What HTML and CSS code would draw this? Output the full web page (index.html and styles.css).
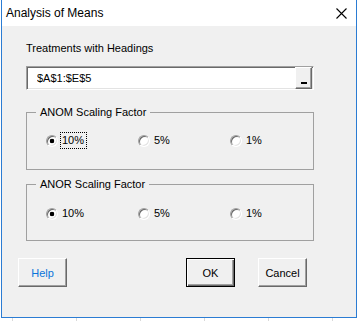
FILE: index.html
```html
<!DOCTYPE html>
<html lang="en">
<head>
    <meta charset="UTF-8">
    <meta name="viewport" content="width=device-width, initial-scale=1.0">
    <title>Analysis of Means</title>
    <link rel="stylesheet" href="styles.css">
</head>
<body>

<div class="window">
    <div class="titlebar">
        <span class="title">Analysis of Means</span>
        <svg class="close" width="11" height="11" viewBox="0 0 11 11">
            <path d="M0.5 0.5 L10.5 10.5 M10.5 0.5 L0.5 10.5" stroke="#000" stroke-width="1.1" fill="none"/>
        </svg>
    </div>

    <div class="content">
        <div class="form">
            <label class="field-label" for="range">Treatments with Headings</label>
            <div class="range">
                <input type="text" id="range" value="$A$1:$E$5">
                <button class="pick"><span class="dash"></span></button>
            </div>

            <fieldset class="group first">
                <legend>ANOM Scaling Factor</legend>
                <div class="options">
                    <label class="opt"><input type="radio" name="anom" checked><span class="opt-text focus">10%</span></label>
                    <label class="opt"><input type="radio" name="anom"><span class="opt-text">5%</span></label>
                    <label class="opt"><input type="radio" name="anom"><span class="opt-text">1%</span></label>
                </div>
            </fieldset>

            <fieldset class="group second">
                <legend>ANOR Scaling Factor</legend>
                <div class="options">
                    <label class="opt"><input type="radio" name="anor" checked><span class="opt-text">10%</span></label>
                    <label class="opt"><input type="radio" name="anor"><span class="opt-text">5%</span></label>
                    <label class="opt"><input type="radio" name="anor"><span class="opt-text">1%</span></label>
                </div>
            </fieldset>
        </div>

        <div class="buttons">
            <button class="btn help">Help</button>
            <div class="btn-group">
                <button class="btn default">OK</button>
                <button class="btn">Cancel</button>
            </div>
        </div>
    </div>
</div>

</body>
</html>
```

FILE: styles.css
```css
* {
    margin: 0;
    padding: 0;
    box-sizing: border-box;
}

body {
    height: 321px;
    overflow: hidden;
    background: #fff repeating-linear-gradient(90deg, transparent 0 12px, #d9d9d9 12px 13px, transparent 13px 64px);
    font-family: "Liberation Sans", Arial, sans-serif;
    font-size: 11px;
    color: #000;
}

.window {
    margin-left: 1px;
    width: 356px;
    height: 318px;
    background: #f0f0f0;
    border: 1px solid #2b7cd3;
    border-top: none;
    display: flex;
    flex-direction: column;
}

.titlebar {
    height: 26px;
    background: #fff;
    display: flex;
    align-items: center;
    justify-content: space-between;
    padding: 0 9px 0 4px;
}

.title {
    font-size: 12px;
}

.close {
    display: block;
}

.content {
    padding: 16px 0 0 16px;
}

.form {
    margin-left: 8px;
    width: 288px;
}

.field-label {
    display: block;
    line-height: 13px;
}

/* range box with the collapse button */
.range {
    margin-top: 11px;
    height: 24px;
    display: flex;
    background: #fff;
    border: 1px solid;
    border-color: #a0a0a0 #fff #fff #a0a0a0;
    box-shadow: inset 1px 1px #696969, inset -1px -1px #e3e3e3;
}

.range input {
    flex: 1;
    min-width: 0;
    border: none;
    background: transparent;
    outline: none;
    font-family: inherit;
    font-size: 11px;
    padding-left: 10px;
    color: #000;
}

.pick {
    width: 17px;
    height: 22px;
    margin-right: 1px;
    background: #f0f0f0;
    border: 1px solid;
    border-color: #fff #696969 #696969 #fff;
    box-shadow: inset -1px -1px #a0a0a0;
    display: flex;
    align-items: flex-end;
    justify-content: center;
    padding-bottom: 4px;
}

.dash {
    width: 6px;
    height: 2px;
    background: #000;
}

/* group boxes */
.group {
    width: 288px;
    min-width: 0;
    border: 1px solid #a0a0a0;
    padding: 13px 0 20px 9px;
    margin-top: 16px;
}

.group.second {
    margin-top: 8px;
    padding: 14px 0 18px 9px;
}

.group legend {
    padding: 0 4px;
    line-height: 13px;
}

.options {
    display: grid;
    grid-template-columns: 92px 92px auto;
    margin-left: 10px;
}

.opt {
    display: flex;
    align-items: center;
    gap: 2px;
}

.opt input {
    appearance: none;
    flex: none;
    width: 12px;
    height: 12px;
    border-radius: 50%;
    border: 1px solid;
    border-color: #a0a0a0 #fff #fff #a0a0a0;
    box-shadow: inset 1px 1px #696969, inset -1px -1px #e3e3e3;
    background: #fff;
}

.opt input:checked {
    background: radial-gradient(circle, #000 0 2px, #fff 2.6px);
}

.opt-text {
    line-height: 15px;
    padding: 0 2px 0 1px;
    border: 1px dotted transparent;
}

.opt-text.focus {
    border-color: #000;
}

/* bottom buttons */
.buttons {
    margin-top: 17px;
    width: 289px;
    display: flex;
    justify-content: space-between;
}

.btn-group {
    display: flex;
    gap: 23px;
}

.btn {
    width: 49px;
    height: 29px;
    background: #f0f0f0;
    border: 1px solid;
    border-color: #fff #696969 #696969 #fff;
    box-shadow: inset -1px -1px #a0a0a0;
    font-family: inherit;
    font-size: 11px;
    color: #000;
}

.btn.help {
    color: #0a74da;
}

.btn.default {
    border-color: #000;
    box-shadow: inset 1px 1px #fff, inset -1px -1px #696969, inset -2px -2px #a0a0a0;
}
```
